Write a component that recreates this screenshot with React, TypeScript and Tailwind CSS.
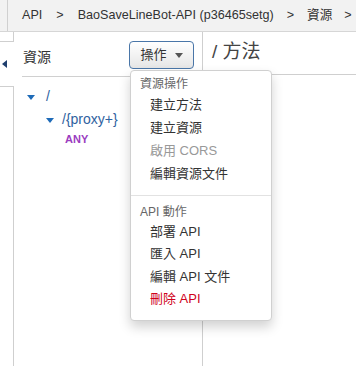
import React from "react";

const font = { fontFamily: '"Liberation Sans", Arial, "Noto Sans CJK TC", sans-serif' };

function Caret({ className }: { className: string }) {
  return (
    <span
      className={`inline-block w-0 h-0 border-l-[4px] border-r-[4px] border-t-[5px] border-l-transparent border-r-transparent ${className}`}
    />
  );
}

export default function App() {
  return (
    <div className="relative w-[356px] h-[366px] overflow-hidden bg-white flex flex-col" style={font}>
      {/* breadcrumb bar */}
      <div className="h-[32px] shrink-0 bg-[#f2f2f2] border-b border-[#d6d6d6] flex overflow-hidden">
        <div className="w-[8px] shrink-0 border-r border-[#d0d0d0]" />
        <div className="flex shrink-0 items-center pl-[14px] text-[12.6px] text-[#333] whitespace-nowrap">
          <span>API</span>
          <span className="mx-[14px]">&gt;</span>
          <span>BaoSaveLineBot-API (p36465setg)</span>
          <span className="mx-[13px]">&gt;</span>
          <span>資源</span>
          <span className="mx-[12px]">&gt;</span>
        </div>
      </div>

      <div className="flex flex-1">
        {/* collapse handle */}
        <div className="w-[14px] flex flex-col shrink-0">
          <div className="h-[10px] border-r border-b border-[#cfcfcf]" />
          <div className="h-[44px] flex items-center pl-[2px]">
            <span className="inline-block w-0 h-0 border-t-[4px] border-b-[4px] border-r-[5px] border-t-transparent border-b-transparent border-r-[#1f3f6e]" />
          </div>
          <div className="flex-1 border-r border-t border-[#cfcfcf]" />
        </div>

        {/* resources panel */}
        <div className="w-[189px] shrink-0 border-r border-[#cfcfcf] pl-[8px] flex flex-col">
          <div className="h-[45px] border-b border-[#d0d0d0] flex items-center justify-between pr-[8px]">
            <span className="text-[14px] text-[#333] pl-[1px] pt-[6px]">資源</span>
            <button className="mt-[2px] w-[65px] h-[28px] rounded-[4px] border border-[#4a76a8] bg-gradient-to-b from-[#ffffff] to-[#e6e6e6] flex items-center justify-center gap-[8px] text-[13px] text-[#333]">
              <span>操作</span>
              <Caret className="border-t-[#555]" />
            </button>
          </div>
          <div className="pt-[11px] text-[14px] text-[#2f62a0]">
            <div className="flex items-center h-[17px]">
              <Caret className="ml-[5px] border-t-[#1e6bb8] mt-[1px]" />
              <span className="ml-[11px]">/</span>
            </div>
            <div className="flex items-center h-[17px] mt-[6px]">
              <Caret className="ml-[24px] border-t-[#1e6bb8] mt-[1px]" />
              <span className="ml-[8px]">/{"{"}proxy+{"}"}</span>
            </div>
            <div className="ml-[43px] mt-[3px] text-[11px] font-bold text-[#9b3dbf]">ANY</div>
          </div>
        </div>

        {/* methods panel */}
        <div className="flex-1 flex flex-col">
          <div className="h-[43px] border-b border-[#cfcfcf] flex items-center pl-[9px] pb-[2px] text-[19px] text-[#444]">
            / 方法
          </div>
        </div>
      </div>

      {/* dropdown */}
      <div className="absolute left-[130px] top-[70px] w-[142px] h-[251px] bg-white border border-[#d0d0d0] rounded-[4px] shadow-[0_6px_12px_rgba(0,0,0,0.18)] text-[13px]">
        <div className="pt-[6px] pl-[9px] text-[12px] text-[#666] leading-[14px]">資源操作</div>
        <div className="pl-[19px] text-[#333]">
          <div className="h-[23px] flex items-center mt-[2px]">建立方法</div>
          <div className="h-[23px] flex items-center">建立資源</div>
          <div className="h-[23px] flex items-center text-[#999]">啟用 CORS</div>
          <div className="h-[23px] flex items-center">編輯資源文件</div>
        </div>
        <div className="mt-[10px] border-t border-[#e2e2e2]" />
        <div className="pt-[9px] pl-[9px] text-[12px] text-[#666] leading-[14px]">API 動作</div>
        <div className="pl-[19px] text-[#333]">
          <div className="h-[22px] flex items-center mt-[2px]">部署 API</div>
          <div className="h-[22px] flex items-center">匯入 API</div>
          <div className="h-[23px] flex items-center">編輯 API 文件</div>
          <div className="h-[22px] flex items-center text-[#d0021b]">刪除 API</div>
        </div>
      </div>
    </div>
  );
}
